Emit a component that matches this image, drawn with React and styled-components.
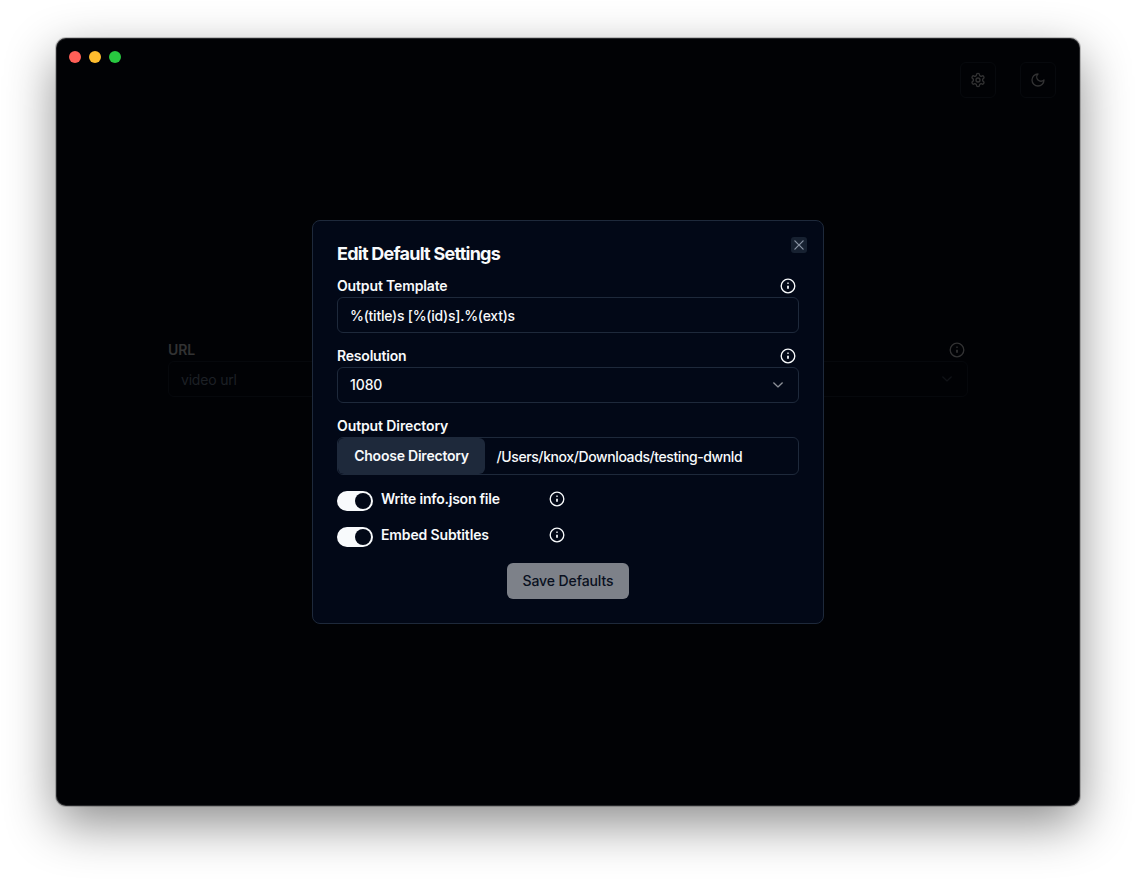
import React from "react";
import styled, { createGlobalStyle } from "styled-components";
import { RxChevronDown, RxCross2 } from "react-icons/rx";

const GlobalStyle = createGlobalStyle`
  *, *::before, *::after { box-sizing: border-box; }
  body {
    margin: 0;
    background: #fff;
    font-family: Inter, "Liberation Sans", sans-serif;
    font-size: 14px;
    -webkit-font-smoothing: antialiased;
  }
  button, input { font: inherit; color: inherit; }
  svg { display: block; flex: none; }
`;

const Desktop = styled.div`
  height: 880px;
  padding: 38px 56px 74px;
  overflow: hidden;
`;

const Window = styled.main`
  position: relative;
  height: 768px;
  display: flex;
  flex-direction: column;
  background: #010205;
  border-radius: 10px;
  box-shadow: 0 0 0 1px rgba(0, 0, 0, 0.2), 0 18px 50px rgba(0, 0, 0, 0.45);
`;

const WindowFrame = styled.div`
  position: absolute;
  inset: 0;
  border-radius: 10px;
  box-shadow: inset 0 0 0 1px rgba(255, 255, 255, 0.15);
  pointer-events: none;
`;

const TitleBar = styled.header`
  height: 84px;
  padding: 13px 24px 0 13px;
  display: flex;
  justify-content: space-between;
  align-items: flex-start;
`;

const Lights = styled.div`
  display: flex;
  gap: 8px;
`;

const Light = styled.span`
  width: 12px;
  height: 12px;
  border-radius: 50%;
  background: ${(p) => p.$color};
`;

const Tools = styled.div`
  display: flex;
  gap: 24px;
  margin-top: 11px;
`;

const IconButton = styled.button`
  width: 36px;
  height: 36px;
  padding: 0;
  display: grid;
  place-items: center;
  border: 1px solid #07090d;
  border-radius: 6px;
  background: transparent;
  color: #323233;
`;

const DownloadForm = styled.section`
  width: 800px;
  margin: 217px auto 0;
  display: grid;
  grid-template-columns: 1fr 1fr;
  color: #323233;
`;

const Field = styled.div`
  display: flex;
  flex-direction: column;
`;

const FieldHead = styled.div`
  height: 22px;
  padding-right: 3px;
  display: flex;
  align-items: center;
  justify-content: space-between;
`;

const Label = styled.label`
  font-weight: 600;
  font-size: 14px;
  line-height: 14px;
  letter-spacing: ${(p) => p.$spacing || "-0.14px"};
`;

const Control = styled.div`
  height: ${(p) => (p.$tall ? 38 : 36)}px;
  padding: 0 ${(p) => (p.$tall ? 0 : 12)}px;
  display: flex;
  align-items: center;
  justify-content: space-between;
  border: 1px solid ${(p) => (p.$dim ? "#06080c" : "#1e293b")};
  border-radius: 6px;
  color: ${(p) => (p.$dim ? "#1d2025" : "inherit")};
`;

const Value = styled.span`
  font-size: 14px;
  font-weight: ${(p) => p.$weight || 400};
  line-height: 20px;
  letter-spacing: ${(p) => p.$spacing || "0"};
  padding-top: ${(p) => p.$drop || 0}px;
`;

const ChevronSlot = styled.span`
  margin-top: -2px;
  opacity: 0.6;
`;

const Overlay = styled.div`
  position: absolute;
  inset: 0;
  display: grid;
  place-items: center;
`;

const Dialog = styled.section`
  position: relative;
  width: 512px;
  height: 404px;
  padding: 24px;
  display: flex;
  flex-direction: column;
  background: #020817;
  border: 1px solid #1e293b;
  border-radius: 8px;
  color: #f8fafc;
`;

const Title = styled.h2`
  margin: 0 0 12px;
  font-size: 18px;
  line-height: 18px;
  font-weight: 700;
  letter-spacing: -0.75px;
`;

const CloseButton = styled.button`
  position: absolute;
  top: 16px;
  right: 16px;
  width: 16px;
  height: 16px;
  padding: 0;
  display: grid;
  place-items: center;
  border: 0;
  border-radius: 3px;
  background: #172131;
  color: #8993a3;
`;

const Fields = styled.div`
  display: flex;
  flex-direction: column;
  gap: 12px;
`;

const ChooseButton = styled.button`
  flex: none;
  width: 147px;
  height: 36px;
  padding: 0;
  border: 0;
  border-radius: 6px;
  background: #1e293b;
  font-weight: 600;
  line-height: 20px;
  letter-spacing: -0.22px;
`;

const DirectoryPath = styled.span`
  flex: 1;
  padding: 2px 0 0 11.5px;
  font-weight: 500;
  line-height: 20px;
  letter-spacing: -0.4px;
`;

const Toggles = styled.div`
  display: flex;
  flex-direction: column;
  gap: 16px;
  margin-top: 16px;
`;

const ToggleRow = styled.div`
  width: 228px;
  height: 20px;
  display: flex;
  align-items: center;
`;

const ToggleLabel = styled(Label)`
  flex: 1;
  padding: 0 0 4px 8px;
`;

const ToggleInfo = styled.span`
  padding-bottom: 4px;
`;

const Switch = styled.button`
  width: 36px;
  height: 20px;
  padding: 2px;
  display: flex;
  justify-content: flex-end;
  border: 0;
  border-radius: 10px;
  background: #f8fafc;
`;

const Thumb = styled.span`
  width: 16px;
  height: 16px;
  border-radius: 50%;
  background: #020817;
`;

const SaveButton = styled.button`
  align-self: center;
  width: 122px;
  height: 36px;
  margin-top: 16px;
  padding: 0 0 2px;
  border: 0;
  border-radius: 6px;
  background: #7d8189;
  color: #091020;
  font-weight: 500;
  letter-spacing: -0.1px;
`;

const StrokeIcon = styled.svg.attrs({
  width: 16,
  height: 16,
  viewBox: "0 0 24 24",
  fill: "none",
  stroke: "currentColor",
  strokeWidth: 2,
  strokeLinecap: "round",
  strokeLinejoin: "round",
})``;

const GearIcon = () => (
  <StrokeIcon>
    <path d="M12.22 2h-.44a2 2 0 0 0-2 2v.18a2 2 0 0 1-1 1.73l-.43.25a2 2 0 0 1-2 0l-.15-.08a2 2 0 0 0-2.73.73l-.22.38a2 2 0 0 0 .73 2.73l.15.1a2 2 0 0 1 1 1.72v.51a2 2 0 0 1-1 1.74l-.15.09a2 2 0 0 0-.73 2.73l.22.38a2 2 0 0 0 2.73.73l.15-.08a2 2 0 0 1 2 0l.43.25a2 2 0 0 1 1 1.73V20a2 2 0 0 0 2 2h.44a2 2 0 0 0 2-2v-.18a2 2 0 0 1 1-1.73l.43-.25a2 2 0 0 1 2 0l.15.08a2 2 0 0 0 2.73-.73l.22-.39a2 2 0 0 0-.73-2.73l-.15-.08a2 2 0 0 1-1-1.74v-.5a2 2 0 0 1 1-1.74l.15-.09a2 2 0 0 0 .73-2.73l-.22-.38a2 2 0 0 0-2.73-.73l-.15.08a2 2 0 0 1-2 0l-.43-.25a2 2 0 0 1-1-1.73V4a2 2 0 0 0-2-2z" />
    <circle cx="12" cy="12" r="3" />
  </StrokeIcon>
);

const MoonIcon = () => (
  <StrokeIcon>
    <path d="M12 3a6 6 0 0 0 9 9 9 9 0 1 1-9-9Z" />
  </StrokeIcon>
);

const InfoIcon = () => (
  <StrokeIcon>
    <circle cx="12" cy="12" r="10.2" />
    <path d="M12 16.2v-4.4M12 7.9h.01" strokeWidth="2.6" strokeLinecap="butt" />
    <path d="M11 7.9h2" strokeWidth="2" strokeLinecap="butt" />
  </StrokeIcon>
);

const Chevron = () => (
  <ChevronSlot>
    <RxChevronDown size={16} strokeWidth={0.3} />
  </ChevronSlot>
);

function Toggle({ children, spacing }) {
  return (
    <ToggleRow>
      <Switch role="switch" aria-checked="true">
        <Thumb />
      </Switch>
      <ToggleLabel $spacing={spacing}>{children}</ToggleLabel>
      <ToggleInfo>
        <InfoIcon />
      </ToggleInfo>
    </ToggleRow>
  );
}

export default function App() {
  return (
    <Desktop>
      <GlobalStyle />
      <Window>
        <TitleBar>
          <Lights>
            <Light $color="#ff5f57" />
            <Light $color="#febc2e" />
            <Light $color="#28c840" />
          </Lights>
          <Tools>
            <IconButton aria-label="Settings">
              <GearIcon />
            </IconButton>
            <IconButton aria-label="Theme">
              <MoonIcon />
            </IconButton>
          </Tools>
        </TitleBar>
        <DownloadForm>
          <Field>
            <FieldHead>
              <Label>URL</Label>
            </FieldHead>
            <Control $dim>
              <Value $drop={2} $spacing="-0.2px">video url</Value>
            </Control>
          </Field>
          <Field>
            <FieldHead>
              <span />
              <InfoIcon />
            </FieldHead>
            <Control $dim>
              <span />
              <Chevron />
            </Control>
          </Field>
        </DownloadForm>
        <Overlay>
          <Dialog role="dialog">
            <Title>Edit Default Settings</Title>
            <CloseButton aria-label="Close">
              <RxCross2 size={16} />
            </CloseButton>
            <Fields>
              <Field>
                <FieldHead>
                  <Label>Output Template</Label>
                  <InfoIcon />
                </FieldHead>
                <Control>
                  <Value $drop={2} $weight={500} $spacing="-0.24px">
                    %(title)s [%(id)s].%(ext)s
                  </Value>
                </Control>
              </Field>
              <Field>
                <FieldHead>
                  <Label $spacing="-0.2px">Resolution</Label>
                  <InfoIcon />
                </FieldHead>
                <Control>
                  <Value $weight={500} $spacing="-0.1px">1080</Value>
                  <Chevron />
                </Control>
              </Field>
              <Field>
                <FieldHead>
                  <Label $spacing="-0.1px">Output Directory</Label>
                </FieldHead>
                <Control $tall>
                  <ChooseButton>Choose Directory</ChooseButton>
                  <DirectoryPath>/Users/knox/Downloads/testing-dwnld</DirectoryPath>
                </Control>
              </Field>
            </Fields>
            <Toggles>
              <Toggle spacing="-0.22px">Write info.json file</Toggle>
              <Toggle>Embed Subtitles</Toggle>
            </Toggles>
            <SaveButton>Save Defaults</SaveButton>
          </Dialog>
        </Overlay>
        <WindowFrame />
      </Window>
    </Desktop>
  );
}
